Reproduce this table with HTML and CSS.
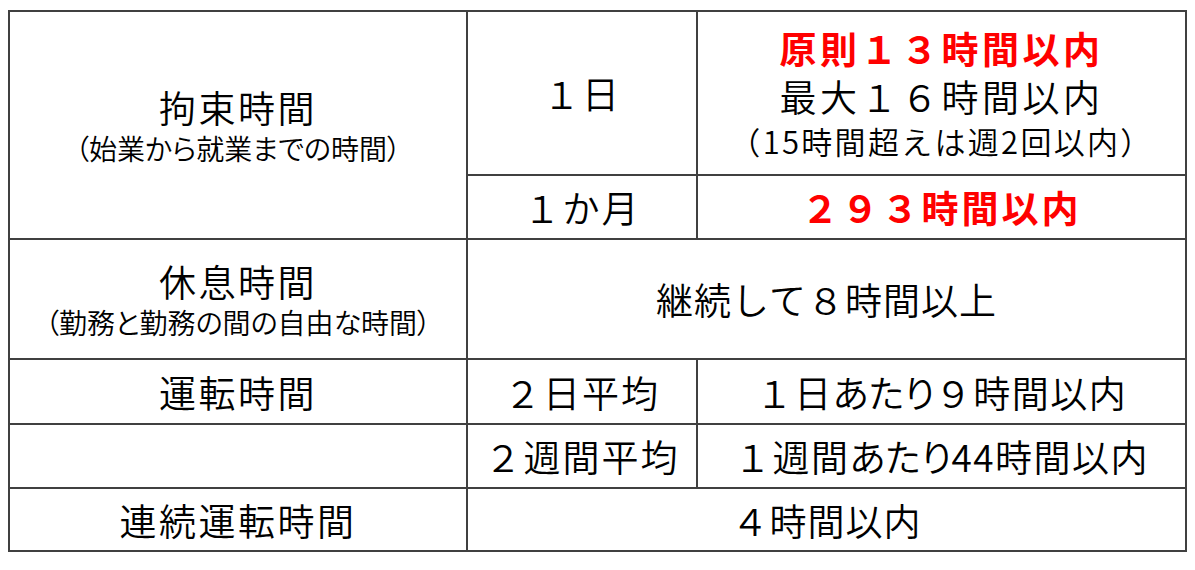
FILE: index.html
```html
<!DOCTYPE html>
<html lang="ja">
<head>
<meta charset="utf-8">
<link rel="stylesheet" href="styles.css">
</head>
<body>
<table class="rules">
  <colgroup>
    <col class="c1">
    <col class="c2">
    <col class="c3">
  </colgroup>
  <tr class="r1a">
    <td rowspan="2" class="head"><div class="main">拘束時間</div><div class="sub">（始業から就業までの時間）</div></td>
    <td class="mid">１日</td>
    <td class="stack"><div class="red l1">原則１３時間以内</div><div class="l2">最大１６時間以内</div><div class="sub2">（15時間超えは週2回以内）</div></td>
  </tr>
  <tr class="r1b">
    <td class="mid">１か月</td>
    <td><span class="red wide">２９３時間以内</span></td>
  </tr>
  <tr class="r2">
    <td class="head"><div class="main">休息時間</div><div class="sub">（勤務と勤務の間の自由な時間）</div></td>
    <td colspan="2">継続して８時間以上</td>
  </tr>
  <tr class="r3">
    <td class="head">運転時間</td>
    <td class="mid">２日平均</td>
    <td class="val">１日<span class="pk">あたり</span>９時間以内</td>
  </tr>
  <tr class="r4">
    <td class="head"></td>
    <td class="mid">２週間平均</td>
    <td class="val">１週間<span class="pk">あたり</span>44時間以内</td>
  </tr>
  <tr class="r5">
    <td class="head">連続運転時間</td>
    <td colspan="2">４時間以内</td>
  </tr>
</table>
</body>
</html>
```

FILE: styles.css
```css
html, body {
  margin: 0;
  padding: 0;
  background: #ffffff;
}
body {
  padding: 10px 8px 0 8px;
  font-family: "Noto Sans CJK JP", "Noto Sans", sans-serif;
  font-weight: 350;
  color: #000000;
}
.rules {
  border-collapse: collapse;
  width: 1177px;
  table-layout: fixed;
}
.c1 { width: 458px; }
.c2 { width: 230px; }
.c3 { width: 489px; }
.rules td {
  border: 2px solid #404040;
  text-align: center;
  vertical-align: middle;
  padding: 0;
  font-size: 37px;
  line-height: 44px;
  letter-spacing: 1px;
}
.rules td.head { letter-spacing: 2.5px; }
.rules td.mid { letter-spacing: 2px; }
.rules td.val { letter-spacing: 1.5px; }
.rules td.stack { padding-top: 0; letter-spacing: 3.5px; }
.r1a { height: 164px; }
.r1b { height: 64px; }
.r2 { height: 120px; }
.r3 { height: 65px; }
.r4 { height: 64px; }
.r5 { height: 63px; }
.main {
  font-size: 37px;
  line-height: 46px;
}
.sub {
  font-size: 28px;
  line-height: 36px;
  letter-spacing: 0;
  font-feature-settings: "palt";
}
.red {
  color: #ff0000;
  font-weight: bold;
}
.l1 { line-height: 48px; }
.l2 { line-height: 48px; }
.sub2 {
  font-size: 31px;
  line-height: 42px;
  letter-spacing: 2.3px;
}
.wide { letter-spacing: 3px; }
.pk { font-feature-settings: "palt"; letter-spacing: 0; }
```
